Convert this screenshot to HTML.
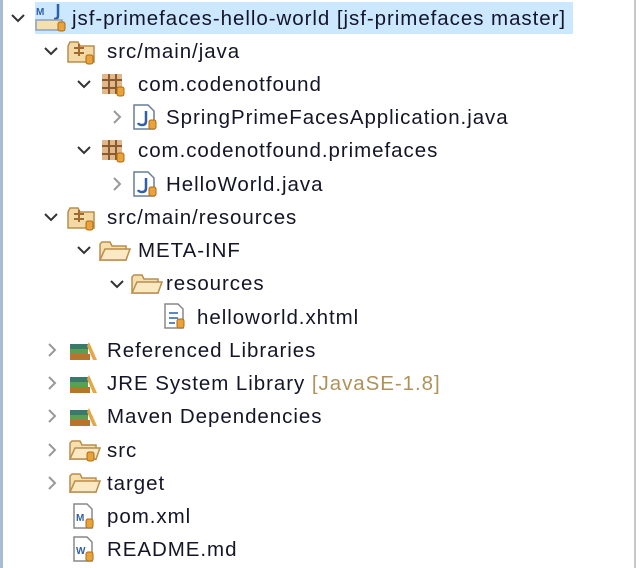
<!DOCTYPE html>
<html><head><meta charset="utf-8"><style>
body{margin:0;width:640px;height:568px;background:#fff;position:relative;overflow:hidden;font-family:"Liberation Sans",sans-serif;font-size:20.5px;letter-spacing:0.95px;color:#151528}
.lb{position:absolute;left:0;top:0;width:3px;height:568px;background:#a9bcd3}
.rb{position:absolute;left:634px;top:0;width:2px;height:568px;background:#c8c8c8}
.sel{position:absolute;left:35px;top:2px;width:538px;height:32px;background:#cce8ff}
.t{position:absolute;white-space:nowrap;line-height:33px;height:33px}
svg{position:absolute}
.g{color:#b0915a}
</style></head><body>
<div class="lb"></div><div class="rb"></div><div class="sel"></div>
<svg width="640" height="568" style="left:0;top:0">
<defs>
<path id="dn" d="M-6,-3 L0,3 L6,-3" fill="none" stroke="#333" stroke-width="2"/>
<path id="rt" d="M-3,-6 L3,0 L-3,6" fill="none" stroke="#999" stroke-width="2"/>
<g id="jar"><rect x="0" y="0" width="7" height="9" rx="2" fill="#e8a33a" stroke="#b06a10" stroke-width="1"/></g>
<g id="srcf"><path d="M0,8 L0,24 L26,24 L26,8 L12,8 L10,4 L2,4 Z" fill="#f2d9a6" stroke="#b98d4c" stroke-width="1.5"/><path d="M6,10 h10 M6,15 h10 M11,6 v12" stroke="#a06a30" stroke-width="2"/></g>
<g id="pkg"><rect x="0" y="2" width="20" height="20" fill="#e0b88a"/><path d="M0,8 h20 M0,16 h20 M7,2 v20 M14,2 v20" stroke="#8a5a30" stroke-width="2"/></g>
<g id="jf"><path d="M0,0 L14,0 L20,6 L20,24 L0,24 Z" fill="#fff" stroke="#6a7d99" stroke-width="1.5"/><path d="M12,6 v10 q0,4 -4,4 q-3,0 -4,-2" fill="none" stroke="#2f5fa8" stroke-width="2.5"/></g>
<g id="fold"><path d="M0,6 L0,22 L26,22 L26,8 L12,8 L10,4 L2,4 Z" fill="#f6dfae" stroke="#b98d4c" stroke-width="1.5"/><path d="M0,22 L5,11 L30,11 L26,22 Z" fill="#fbe9c4" stroke="#b98d4c" stroke-width="1.5"/></g>
<g id="lib"><rect x="0" y="6" width="18" height="5" fill="#3a7a6a"/><rect x="0" y="11" width="18" height="5" fill="#5aa050"/><rect x="0" y="16" width="20" height="6" fill="#b8742a"/><path d="M19,4 L27,22 L23,22 L17,8 Z" fill="#e3a845"/></g>
</defs>
<use href="#dn" x="18" y="18"/>
<g transform="translate(36,4)"><text x="0" y="11" font-size="10" fill="#2f5fa8" font-family="Liberation Sans" font-weight="bold">M</text><path d="M22,0 v12 q0,3 -4,3" fill="none" stroke="#2f5fa8" stroke-width="2.5"/><path d="M0,16 L0,26 L26,26 L26,16 Z" fill="#f6dfae" stroke="#8aa0c0" stroke-width="1.5"/><use href="#jar" x="22" y="18"/></g>
<use href="#dn" x="51" y="51"/><g transform="translate(68,38)"><use href="#srcf"/><use href="#jar" x="18" y="17"/></g>
<use href="#dn" x="84" y="84"/><g transform="translate(102,72)"><use href="#pkg"/><use href="#jar" x="15" y="15"/></g>
<use href="#rt" x="117" y="117"/><g transform="translate(134,105)"><use href="#jf"/><use href="#jar" x="15" y="15"/></g>
<use href="#dn" x="84" y="150"/><g transform="translate(102,138)"><use href="#pkg"/><use href="#jar" x="15" y="15"/></g>
<use href="#rt" x="117" y="184"/><g transform="translate(134,172)"><use href="#jf"/><use href="#jar" x="15" y="15"/></g>
<use href="#dn" x="51" y="217"/><g transform="translate(68,204)"><use href="#srcf"/><use href="#jar" x="18" y="17"/></g>
<use href="#dn" x="84" y="250"/><g transform="translate(100,238)"><use href="#fold"/></g>
<use href="#dn" x="117" y="284"/><g transform="translate(132,271)"><use href="#fold"/></g>
<g transform="translate(165,304)"><path d="M0,0 L13,0 L18,5 L18,24 L0,24 Z" fill="#fff" stroke="#888" stroke-width="1.5"/><path d="M4,9 h9 M4,14 h9 M4,19 h6" stroke="#5a8ac0" stroke-width="2"/><use href="#jar" x="12" y="15"/></g>
<use href="#rt" x="52" y="350"/><g transform="translate(70,338)"><use href="#lib"/></g>
<use href="#rt" x="52" y="383"/><g transform="translate(70,371)"><use href="#lib"/></g>
<use href="#rt" x="52" y="416"/><g transform="translate(70,404)"><use href="#lib"/></g>
<use href="#rt" x="52" y="450"/><g transform="translate(70,437)"><use href="#fold"/><use href="#jar" x="17" y="15"/></g>
<use href="#rt" x="52" y="483"/><g transform="translate(70,470)"><use href="#fold"/></g>
<g transform="translate(74,504)"><path d="M0,0 L13,0 L18,5 L18,24 L0,24 Z" fill="#fff" stroke="#888" stroke-width="1.5"/><text x="2" y="17" font-size="10" font-weight="bold" fill="#2f5fa8" font-family="Liberation Sans">M</text><use href="#jar" x="12" y="15"/></g>
<g transform="translate(74,537)"><path d="M0,0 L13,0 L18,5 L18,24 L0,24 Z" fill="#fff" stroke="#888" stroke-width="1.5"/><text x="2" y="17" font-size="10" font-weight="bold" fill="#2f5fa8" font-family="Liberation Sans">W</text><use href="#jar" x="12" y="15"/></g>
</svg>
<div class="t" style="left:72px;top:2px">jsf-primefaces-hello-world [jsf-primefaces master]</div>
<div class="t" style="left:107px;top:35px">src/main/java</div>
<div class="t" style="left:138px;top:68px">com.codenotfound</div>
<div class="t" style="left:166px;top:101px">SpringPrimeFacesApplication.java</div>
<div class="t" style="left:138px;top:134px">com.codenotfound.primefaces</div>
<div class="t" style="left:166px;top:168px">HelloWorld.java</div>
<div class="t" style="left:107px;top:201px">src/main/resources</div>
<div class="t" style="left:138px;top:234px">META-INF</div>
<div class="t" style="left:166px;top:267px">resources</div>
<div class="t" style="left:197px;top:301px">helloworld.xhtml</div>
<div class="t" style="left:107px;top:334px">Referenced Libraries</div>
<div class="t" style="left:107px;top:367px">JRE System Library <span class="g">[JavaSE-1.8]</span></div>
<div class="t" style="left:107px;top:400px">Maven Dependencies</div>
<div class="t" style="left:107px;top:434px">src</div>
<div class="t" style="left:107px;top:467px">target</div>
<div class="t" style="left:107px;top:500px">pom.xml</div>
<div class="t" style="left:107px;top:533px">README.md</div>
</body></html>
